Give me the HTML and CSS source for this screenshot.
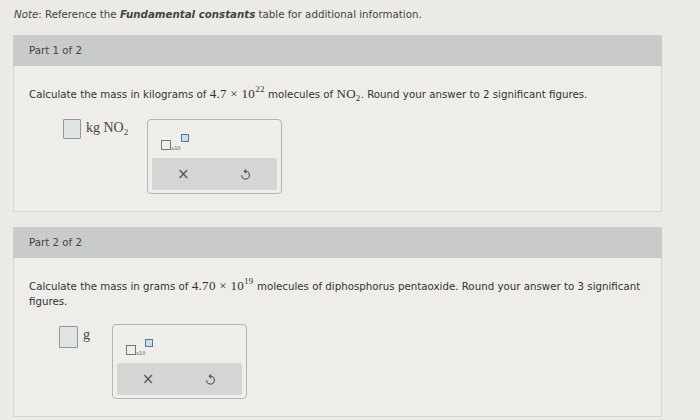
FILE: index.html
```html
<!DOCTYPE html>
<html lang="en">
  <head>
    <meta charset="UTF-8" />
    <title>Fundamental constants</title>
    <link rel="stylesheet" href="styles.css">
  </head>
  <body>
    <p class="note"><i>Note</i>: Reference the <b><i>Fundamental constants</i></b> table for additional information.</p>

    <div class="part">
      <div class="part-head">Part 1 of 2</div>
      <div class="part-body">
        <p class="question">Calculate the mass in kilograms of <span class="math">4.7 &times; 10<sup>22</sup></span> molecules of <span class="math">NO<sub>2</sub></span>. Round your answer to 2 significant figures.</p>
        <div class="answer-row">
          <div class="answer">
            <span class="box"></span>
            <span class="math unit">kg NO<sub>2</sub></span>
          </div>
          <div class="tools">
            <div class="sci"><span class="sci-base"></span><span class="sci-x">x10</span><span class="sci-exp"></span></div>
            <div class="tool-btns">
              <span class="btn-x">&times;</span>
              <svg class="btn-undo" width="12" height="12" viewBox="0 0 12 12"><path d="M5 3 H6 A3.6 3.6 0 1 1 2.4 6.6" fill="none" stroke="#555" stroke-width="1.1"/><path d="M6.6 1.2 L4.8 3 L6.6 4.8" fill="none" stroke="#555" stroke-width="1.1"/></svg>
            </div>
          </div>
        </div>
      </div>
    </div>

    <div class="part">
      <div class="part-head">Part 2 of 2</div>
      <div class="part-body">
        <p class="question">Calculate the mass in grams of <span class="math">4.70 &times; 10<sup>19</sup></span> molecules of diphosphorus pentaoxide. Round your answer to 3 significant figures.</p>
        <div class="answer-row second">
          <div class="answer">
            <span class="box"></span>
            <span class="math unit">g</span>
          </div>
          <div class="tools">
            <div class="sci"><span class="sci-base"></span><span class="sci-x">x10</span><span class="sci-exp"></span></div>
            <div class="tool-btns">
              <span class="btn-x">&times;</span>
              <svg class="btn-undo" width="12" height="12" viewBox="0 0 12 12"><path d="M5 3 H6 A3.6 3.6 0 1 1 2.4 6.6" fill="none" stroke="#555" stroke-width="1.1"/><path d="M6.6 1.2 L4.8 3 L6.6 4.8" fill="none" stroke="#555" stroke-width="1.1"/></svg>
            </div>
          </div>
        </div>
      </div>
    </div>
  </body>
</html>
```

FILE: styles.css
```css
body {
  margin: 0;
  padding: 8px 38px 0 13px;
  background-color: #ebeae6;
  font-family: "DejaVu Sans", Verdana, sans-serif;
  font-size: 10.25px;
  color: #333;
}
.note {
  margin: 0 0 14px 1px;
  line-height: 13px;
  color: #444;
}
.part {
  margin-bottom: 15px;
}
.part-head {
  background-color: #c8cbc9;
  height: 31px;
  line-height: 31px;
  padding-left: 16px;
  color: #444;
  border-radius: 2px 2px 0 0;
}
.part-body {
  background-color: #eeedea;
  border: 1px solid #d6d6d3;
  border-top: none;
  padding: 21px 10px 17px 15px;
}
.question {
  margin: 0;
  line-height: 15px;
}
.math {
  font-family: "Liberation Serif", "Times New Roman", serif;
  font-size: 13px;
  line-height: 1;
  color: #333;
  letter-spacing: 0.3px;
}
sup, sub {
  font-size: 9px;
  line-height: 0;
}
sup {
  vertical-align: 6px;
}
sub {
  vertical-align: -3px;
}
.answer-row {
  display: flex;
  align-items: flex-start;
  margin-top: 17px;
  margin-left: 34px;
  gap: 19px;
}
.answer {
  display: flex;
  align-items: flex-start;
  gap: 5px;
}
.box {
  width: 16px;
  height: 18px;
  border: 1px solid #8e9896;
  background-color: #dfe4e2;
  border-radius: 1px;
}
.unit {
  font-size: 14px;
  line-height: 18px;
  color: #444;
  letter-spacing: 0;
}
.tools {
  box-sizing: border-box;
  width: 135px;
  height: 75px;
  border: 1px solid #b5b6b4;
  border-radius: 4px;
  background-color: #efeeeb;
  padding: 3px 4px;
  display: flex;
  flex-direction: column;
}
.sci {
  display: flex;
  align-items: flex-start;
  padding: 11px 0 0 9px;
}
.sci-base {
  width: 8px;
  height: 8px;
  margin-top: 6px;
  border: 1px solid #777;
}
.sci-x {
  font-size: 5px;
  margin-top: 11px;
  color: #555;
}
.sci-exp {
  width: 6px;
  height: 6px;
  border: 1px solid #4a7f98;
  background-color: #cfdde2;
}
.tool-btns {
  margin-top: auto;
  height: 32px;
  background-color: #d5d6d4;
  border-radius: 2px;
  display: flex;
  align-items: center;
  justify-content: space-around;
}
.btn-x {
  font-size: 15px;
  color: #555;
}
.btn-undo {
  width: 13px;
  height: 13px;
}
.second {
  margin-left: 30px;
  gap: 22px;
}
.second .box {
  width: 17px;
  height: 20px;
}
.second .tools {
  margin-top: -2px;
}
```
